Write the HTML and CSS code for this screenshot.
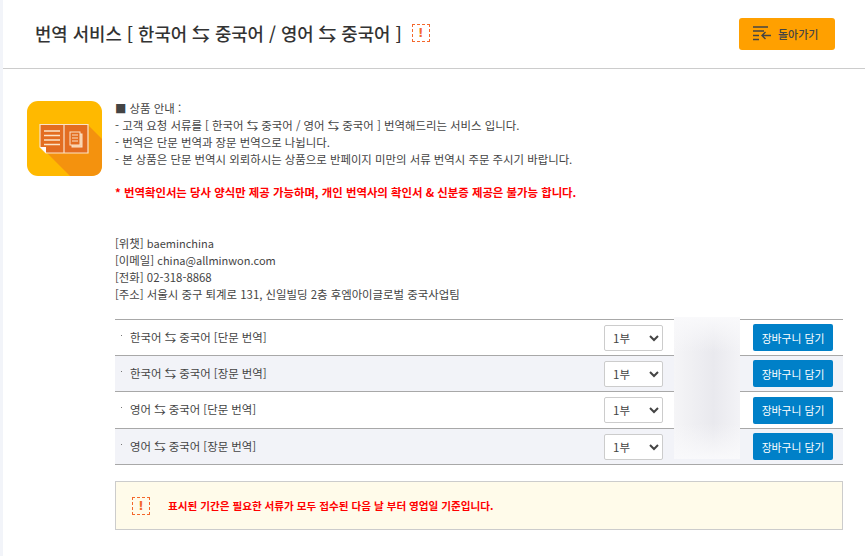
FILE: index.html
```html
<!DOCTYPE html>
<html lang="ko">
<head>
<meta charset="utf-8">
<title>번역 서비스</title>
<link rel="stylesheet" href="styles.css">
</head>
<body>
<main class="page">
  <header class="head">
    <h1 class="title">번역 서비스 [ 한국어 ⇆ 중국어 / 영어 ⇆ 중국어 ]</h1>
    <span class="alert-icon head-alert">!</span>
    <a class="back" href="#">
      <svg class="back-icon" width="19" height="15" viewBox="0 0 19 15" fill="none" stroke="#444" stroke-width="1.400">
        <path d="M0 1H15M0 5H11M0 9.500H6M0 13.500H6M18 9.500H9M12.500 6L9 9.500L12.500 13"/>
      </svg>
      돌아가기
    </a>
  </header>

  <section class="intro">
    <svg class="product-icon" width="75" height="75" viewBox="0 0 75 75">
      <rect width="75" height="75" rx="11" fill="#ffb900"/>
      <path d="M61 24L75 38V64Q75 75 64 75H43L18 50Z" fill="#f4920e"/>
      <path d="M13 23.500H61V52H19L13 46Z" fill="#e36d21"/>
      <path d="M13 23.500H61V52H19L13 46ZM37 23.500V52" fill="none" stroke="#fbe3c8" stroke-width="1.200"/>
      <path d="M13 46H19V52Z" fill="#fff"/>
      <path d="M17 30H33M17 34.500H33M17 39H33M17 43.500H33" stroke="#fbe3c8" stroke-width="1.300"/>
      <rect x="45" y="33" width="10" height="13" fill="#f9c79a" stroke="#fbe3c8"/>
      <rect x="43" y="31" width="10" height="13" fill="#e36d21" stroke="#fbe3c8"/>
      <path d="M45 34H51M45 37H51M45 40H51" stroke="#fbe3c8"/>
    </svg>
    <div class="copy">
      <p>■ 상품 안내 :</p>
      <p>- 고객 요청 서류를 [ 한국어 ⇆ 중국어 / 영어 ⇆ 중국어 ] 번역해드리는 서비스 입니다.</p>
      <p>- 번역은 단문 번역과 장문 번역으로 나뉩니다.</p>
      <p>- 본 상품은 단문 번역시 외뢰하시는 상품으로 반페이지 미만의 서류 번역시 주문 주시기 바랍니다.</p>
      <p class="warn">* 번역확인서는 당사 양식만 제공 가능하며, 개인 번역사의 확인서 &amp; 신분증 제공은 불가능 합니다.</p>
      <p class="contact">[위챗] <span class="latin">baeminchina</span></p>
      <p>[이메일] <span class="latin">china@allminwon.com</span></p>
      <p>[전화] 02-318-8868</p>
      <p>[주소] 서울시 중구 퇴계로 131, 신일빌딩 2층 후엠아이글로벌 중국사업팀</p>
    </div>
  </section>

  <section class="products">
    <div class="row">
      <span class="name">한국어 ⇆ 중국어 [단문 번역]</span>
      <select class="qty"><option>1부</option></select>
      <button class="cart">장바구니 담기</button>
    </div>
    <div class="row alt">
      <span class="name">한국어 ⇆ 중국어 [장문 번역]</span>
      <select class="qty"><option>1부</option></select>
      <button class="cart">장바구니 담기</button>
    </div>
    <div class="row tall">
      <span class="name">영어 ⇆ 중국어 [단문 번역]</span>
      <select class="qty"><option>1부</option></select>
      <button class="cart">장바구니 담기</button>
    </div>
    <div class="row alt">
      <span class="name">영어 ⇆ 중국어 [장문 번역]</span>
      <select class="qty"><option>1부</option></select>
      <button class="cart">장바구니 담기</button>
    </div>
    <div class="blur"></div>
  </section>

  <aside class="notice">
    <span class="alert-icon">!</span>
    <strong>표시된 기간은 필요한 서류가 모두 접수된 다음 날 부터 영업일 기준입니다.</strong>
  </aside>
</main>
</body>
</html>
```

FILE: styles.css
```css
* { box-sizing: border-box; }
html, body { margin: 0; height: 100%; }
body {
  background: #f2f4f9;
  font-family: "Noto Sans CJK KR", "Noto Sans", sans-serif;
  color: #444;
  font-size: 11.4px;
  overflow: hidden;
}
.page {
  margin-left: 3px;
  height: 556px;
  background: #fff;
}
.head {
  height: 69px;
  border-bottom: 1px solid #ccc;
  display: flex;
  align-items: center;
  padding: 0 30px 2px 32px;
}
.title {
  margin: 0;
  font-size: 17.8px;
  font-weight: 500;
  color: #333;
  line-height: 24px;
}
.head-alert { margin-left: 10px; }
.alert-icon {
  flex: none;
  width: 18px;
  height: 18px;
  border: 1px dashed #f4682c;
  color: #f4682c;
  font: 700 12px/16px "DejaVu Sans", sans-serif;
  text-align: center;
}
.back {
  margin-left: auto;
  width: 96px;
  height: 32px;
  margin-top: 1px;
  padding-left: 14px;
  border-radius: 3px;
  background: #ffa000;
  color: #444;
  font-size: 11px;
  text-decoration: none;
  display: flex;
  align-items: center;
  gap: 6px;
  font-weight: 500;
}
.intro {
  display: flex;
  padding: 32px 21px 0 24px;
  gap: 13px;
}
.product-icon { flex: none; }
.copy { margin-top: -1px; }
.copy p {
  margin: 0;
  line-height: 17px;
  white-space: nowrap;
}
.copy .warn {
  margin-top: 16px;
  color: #f00;
  font-weight: 700;
}
.copy .contact { margin-top: 34px; }
.latin { font-size: 11px; }
.products {
  position: relative;
  margin: 16px 22px 0 112px;
  border-top: 1px solid #a8a8a8;
}
.row {
  height: 36px;
  border-bottom: 1px solid #a8a8a8;
  display: flex;
  align-items: center;
  padding: 0 10px 2px 6px;
}
.row.tall { height: 37px; }
.row.alt { background: #f2f3f8; }
.name {
  flex: 1;
  padding-left: 9px;
  position: relative;
}
.name::before {
  content: "";
  position: absolute;
  left: 0;
  top: 6px;
  width: 1px;
  height: 1px;
  background: #777;
}
.qty {
  width: 59px;
  height: 26px;
  margin-top: 2px;
  margin-right: 90px;
  border: 1px solid #ccc;
  border-radius: 2px;
  background: #fff;
  color: #444;
  font: 11.500px "Noto Sans CJK KR", sans-serif;
  padding-left: 4px;
}
.cart {
  width: 80px;
  height: 27px;
  margin-top: 2px;
  border: 0;
  border-radius: 2px;
  background: #0080c8;
  color: #fff;
  font: 10.800px "Noto Sans CJK KR", sans-serif;
  padding: 0;
}
.blur {
  position: absolute;
  left: 559px;
  top: -3px;
  width: 66px;
  height: 142px;
  background:
    linear-gradient(180deg, #f9f9fb, rgba(249, 249, 251, 0) 25%, rgba(249, 249, 251, 0) 75%, #f9f9fb),
    linear-gradient(90deg, #f5f5f7, #e9e9ee 60%, #f3f3f6);
}
.notice {
  margin: 16px 22px 0 112px;
  height: 49px;
  border: 1px solid #ccc;
  background: #fffbea;
  display: flex;
  align-items: center;
  padding: 0 16px;
  gap: 18px;
}
.notice strong {
  color: #f00;
  font-size: 10.600px;
  font-weight: 700;
}
```
